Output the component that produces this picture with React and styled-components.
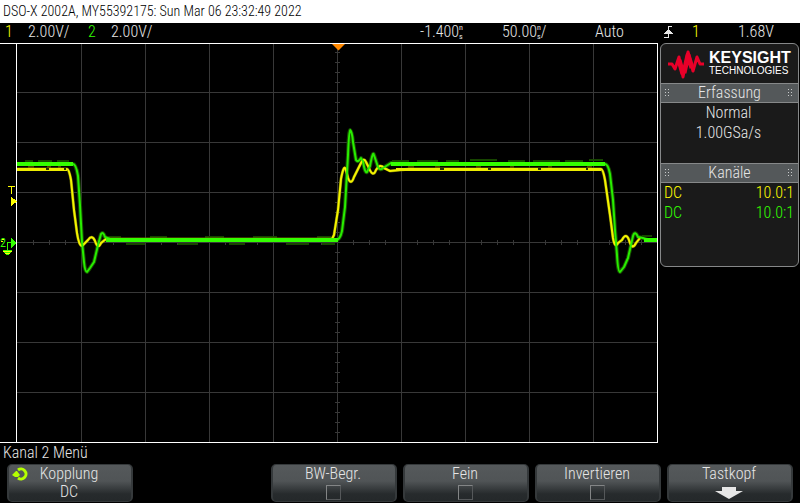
import React from "react";
import styled, { createGlobalStyle } from "styled-components";

const YELLOW = "#ffff00";
const GREEN = "#33ff00";

const GlobalStyle = createGlobalStyle`
  * { box-sizing: border-box; }
  body {
    margin: 0;
    background: #000;
    color: #e6e6e6;
    font: 300 16px/20px "Roboto Condensed", "Liberation Sans Narrow", "Liberation Sans", sans-serif;
  }
`;

const Screen = styled.main`
  display: flex;
  flex-direction: column;
  overflow: hidden;
`;

const TitleBar = styled.header`
  height: 23px;
  padding: 0 3px;
  background: #fff;
  color: #000;
  font-size: 14px;
  line-height: 23px;
  white-space: nowrap;
`;

const StatusBar = styled.div`
  display: grid;
  grid-template-columns: 23px 60px 23px 1fr 82px 93px 69px 28px 46px 62px;
  height: 20px;
  padding-left: 5px;
  line-height: 18px;
  white-space: nowrap;
`;

const Reading = styled.span`
  display: flex;
  align-items: center;
  height: 18px;
  color: ${(p) => p.$color || "inherit"};
`;

const Unit = styled.span`
  display: flex;
  flex-direction: column;
  font-size: 8px;
  font-weight: 400;
  line-height: 9px;
`;

const Workspace = styled.div`
  display: grid;
  grid-template-columns: minmax(0, 1fr) 142px;
  align-items: start;
`;

const Graticule = styled.svg`
  display: block;
  width: 100%;
  height: auto;
`;

const Sidebar = styled.aside`
  margin: 0 1px 0 2px;
  min-height: 224px;
  border: 1px solid #868889;
  border-radius: 6px;
  background: #1a1a1a;
  overflow: hidden;
`;

const Brand = styled.div`
  display: flex;
  align-items: center;
  gap: 5px;
  height: 39px;
  padding: 0 7px;
`;

const BrandName = styled.div`
  color: #fff;
  font: bold 16px/14px "Liberation Sans", sans-serif;
`;

const BrandSub = styled.div`
  color: #fff;
  font: 10px/11px "Liberation Sans", sans-serif;
`;

const PanelTitle = styled.h2`
  display: flex;
  align-items: center;
  justify-content: space-between;
  height: 20px;
  margin: 0;
  padding: 0 4px;
  border: solid #868889;
  border-width: 1px 0;
  background: #54585a;
  font-size: 16px;
  font-weight: 300;
  line-height: 18px;
`;

const PanelBody = styled.div`
  min-height: 60px;
  padding-right: 2px;
  text-align: center;
`;

const ProbeRow = styled.div`
  display: flex;
  justify-content: space-between;
  padding: 0 2px 0 3px;
  color: ${(p) => p.$color};
`;

const MenuName = styled.div`
  height: 21px;
  padding: 0 3px;
`;

const Softkeys = styled.nav`
  display: grid;
  grid-template-columns: repeat(6, 1fr);
  gap: 6px;
  padding: 0 7px 1px;
`;

const keyFace = `
  display: flex;
  flex-direction: column;
  align-items: center;
  height: 38px;
  margin: 0;
  padding: 0 2px 0 0;
  border: 2px solid #35393b;
  border-width: 1px 2px;
  border-radius: 5px;
  background: linear-gradient(#55595b 0, #505456 45%, #272b2d 80%, #24282a 100%);
  color: #e6e6e6;
  font: inherit;
  line-height: 18px;
`;

const KeyButton = styled.button`
  ${keyFace}
  position: relative;
`;

const KeyToggle = styled.label`
  ${keyFace}
`;

const KeySpace = styled.span`
  height: 38px;
`;

const CheckBox = styled.input`
  appearance: none;
  width: 15px;
  height: 15px;
  margin: 2px 0 0;
  border: 1px solid #77797a;
  border-color: #838586 #55585a #55585a #838586;
`;

const KnobIcon = styled.svg`
  position: absolute;
  left: 3px;
  top: 1px;
`;

const GripIcon = () => (
  <svg width="6" height="8" viewBox="0 0 6 8" fill="#c8cacb" shapeRendering="crispEdges">
    {[0, 3, 6].map((y) => (
      <React.Fragment key={y}>
        <rect x="0" y={y} width="1" height="1" />
        <rect x="3" y={y} width="1" height="1" />
      </React.Fragment>
    ))}
  </svg>
);

const SparkLogo = () => (
  <svg width="36" height="30" viewBox="0 0 36 30" fill="none" stroke="#e90029" strokeLinejoin="round">
    <path d="M0 15H4L7 20L11 8L15 28L20 3L25 22L29 8L32 15H36" strokeWidth="3" />
    <path d="M11 11L15 25M16 24L20 6L24 19" strokeWidth="5" />
  </svg>
);

const EdgeIcon = () => (
  <svg width="9" height="12" viewBox="0 0 9 12" fill="none" stroke="#e6e6e6" shapeRendering="crispEdges">
    <path d="M0 11.5H4.5V.5H8" />
    <path d="M0 8L4.500 3L9 8Z" fill="#e6e6e6" stroke="none" />
  </svg>
);

const times = (n, start, step) => Array.from({ length: n }, (_, i) => start + i * step);

const greenTrace =
  "M17 164H73Q76 164 78 176L80 205L82 242L84 262Q85 272 87 272L90 268L94 262L98 245L101 234Q103 231 105 237L110 239L120 240H336Q340 240 342 231L345 207L348 155Q349 130 350 130Q352 131 353 142L356 160Q358 163 361 158L363 161Q365 174 367 172L370 166Q373 150 374 155L378 167Q380 171 383 168L391 163L400 164H605Q608 164 610 174L613 200L615 230L617 255Q618 272 620 272L624 267L628 258L631 245L633 236Q635 230 638 237L643 238L648 240H657";
const yellowTrace =
  "M17 169H67Q69 169 71 180L74 210L77 233Q79 246 82 246L88 240Q92 234 95 241Q98 250 101 243L106 239H332L334 235L338 210L341 179Q344 163 346 170L348 178Q351 186 354 177L361 163Q364 157 366 162L369 168Q373 178 376 170Q380 163 384 168L390 171L400 170L410 169H601Q603 169 605 180L610 215L613 238Q615 249 618 243L622 240Q626 232 629 240Q632 251 636 243L640 238";

const noise =
  "M25 161H33M38 161H52M57 161H69M108 237H121M126 244H145M150 237H167M178 244H198M205 237H224M229 244H245M253 237H277M286 244H309M317 237H331M322 244H335M392 161H409M417 161H438M446 161H459M470 160H497M508 161H525M533 161H560M565 161H583M589 160H603M642 236H652";

const Plot = () => (
  <Graticule viewBox="0 43 658 400" role="img" aria-label="Kanal 1, Kanal 2">
    <g fill="none" stroke="#383838" shapeRendering="crispEdges">
      {times(9, 81, 64).map((x) => <path key={x} d={`M${x}.5 44V442`} />)}
      {times(7, 92, 50).map((y) => <path key={y} d={`M17 ${y}.5H657`} />)}
      {times(39, 52, 10).map((y) => <path key={y} d={`M335 ${y}.5H340`} />)}
      {times(39, 33, 16).map((x) => <path key={x} d={`M${x}.5 240V245`} />)}
    </g>
    <path d="M332 44H345L338.500 50.500Z" fill="#ff8800" />
    <g fill="none" strokeLinejoin="round">
      <path d={greenTrace} stroke="#175000" strokeWidth="4" />
      <path d={noise} stroke="#174500" strokeWidth="2" />
      <path d={yellowTrace} stroke="#6a6a00" strokeWidth="3" />
      <path d={yellowTrace} stroke="#f4f400" strokeWidth="2" />
      <path d="M17 169.500H67M396 169.500H601" stroke="#ecec00" strokeWidth="3" />
      <path d="M28 167H34M47 167H51M58 167H61M408 167H414M435 167H440M476 167H481M510 167H514M548 167H552M587 167H592" stroke="#8b7600" />
      <path d="M46 169H49M64 169H66M440 169H444M488 169H491M538 169H541M586 169H588" stroke="#253500" strokeWidth="2" />
      <path d={greenTrace} stroke="#28ee00" strokeWidth="2" />
      <path d="M17 164H73M391 164H605" stroke={GREEN} strokeWidth="4" />
      <path d="M106 240H338M644 240H657" stroke={GREEN} strokeWidth="4" />
    </g>
    <path d="M0 43.500H658M0 442.500H658M16.500 43V443M657.500 43V443" stroke="#fff" shapeRendering="crispEdges" />
    <path d="M8 186.500H15M11.500 186V194M11 197L16 201.500L11 206Z" stroke={YELLOW} strokeWidth="1" fill={YELLOW} shapeRendering="crispEdges" />
    <text x="0" y="247" fill={GREEN} fontSize="12" fontWeight="400">2</text>
    <path d="M2 239.500H4M1 241.500H3" stroke={YELLOW} shapeRendering="crispEdges" />
    <path d="M11 238L16 243L11 248ZM7 242.500H11M7.500 242V250M3 250.500H12M4 252.500H11M6 254.500H9" stroke={GREEN} fill={GREEN} shapeRendering="crispEdges" />
    <path d="M3 251.500H12M5 253.500H10" stroke={YELLOW} shapeRendering="crispEdges" />
  </Graticule>
);

const Nano = () => (
  <Unit>
    <span>n</span>
    <span>s</span>
  </Unit>
);

const Heading = ({ children }) => (
  <PanelTitle>
    <GripIcon />
    {children}
    <GripIcon />
  </PanelTitle>
);

const Toggle = ({ label }) => (
  <KeyToggle>
    {label}
    <CheckBox type="checkbox" />
  </KeyToggle>
);

export default function App() {
  return (
    <Screen>
      <GlobalStyle />
      <TitleBar>DSO-X 2002A, MY55392175: Sun Mar 06 23:32:49 2022</TitleBar>
      <StatusBar>
        <Reading $color={YELLOW}>1</Reading>
        <Reading>2.00V/</Reading>
        <Reading $color={GREEN}>2</Reading>
        <Reading>2.00V/</Reading>
        <Reading>-1.400<Nano /></Reading>
        <Reading>50.00<Nano />/</Reading>
        <Reading>Auto</Reading>
        <Reading><EdgeIcon /></Reading>
        <Reading $color={YELLOW}>1</Reading>
        <Reading>1.68V</Reading>
      </StatusBar>
      <Workspace>
        <Plot />
        <Sidebar>
          <Brand>
            <SparkLogo />
            <div>
              <BrandName>KEYSIGHT</BrandName>
              <BrandSub>TECHNOLOGIES</BrandSub>
            </div>
          </Brand>
          <Heading>Erfassung</Heading>
          <PanelBody>
            <div>Normal</div>
            <div>1.00GSa/s</div>
          </PanelBody>
          <Heading>Kanäle</Heading>
          <PanelBody>
            <ProbeRow $color={YELLOW}><span>DC</span><span>10.0:1</span></ProbeRow>
            <ProbeRow $color={GREEN}><span>DC</span><span>10.0:1</span></ProbeRow>
          </PanelBody>
        </Sidebar>
      </Workspace>
      <MenuName>Kanal 2 Menü</MenuName>
      <Softkeys>
        <KeyButton>
          <KnobIcon width="18" height="16" viewBox="0 0 18 16">
            <path d="M6 4A5 5 0 1 1 6 12" fill="none" stroke="#b4ff00" strokeWidth="3" />
            <path d="M0 9L4 5L5 5L8 9L6 11H3Z" fill="#b4ff00" />
          </KnobIcon>
          <span>Kopplung</span>
          <span>DC</span>
        </KeyButton>
        <KeySpace />
        <Toggle label="BW-Begr." />
        <Toggle label="Fein" />
        <Toggle label="Invertieren" />
        <KeyButton>
          <span>Tastkopf</span>
          <svg width="30" height="18" viewBox="0 0 30 18" fill="#e6e6e6">
            <path d="M8 4H22V8H29L15 16L1 8H8Z" />
          </svg>
        </KeyButton>
      </Softkeys>
    </Screen>
  );
}
